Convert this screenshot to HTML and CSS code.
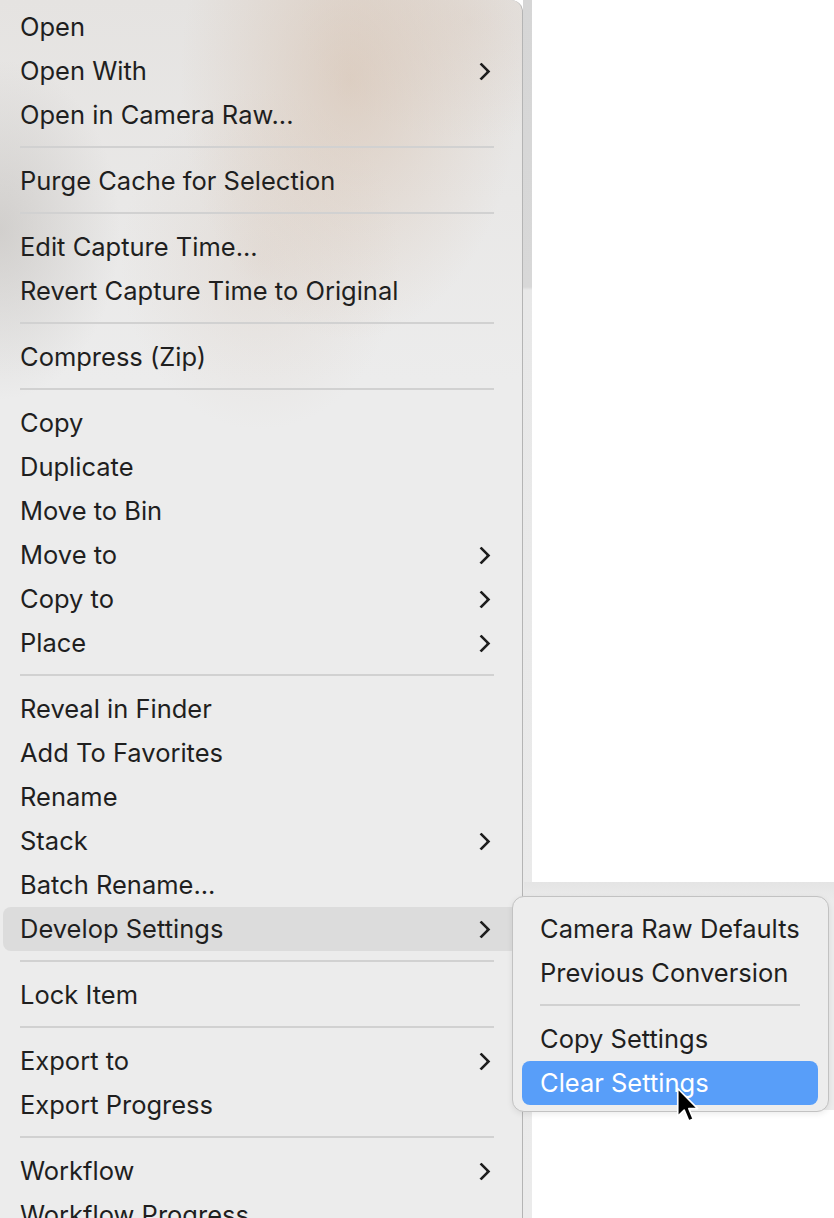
FILE: index.html
```html
<!DOCTYPE html>
<html>
<head>
<meta charset="utf-8">
<link rel="stylesheet" href="styles.css">
</head>
<body>
<div class="screen">
  <div class="menu">
    <div class="item">Open</div>
    <div class="item">Open With<span class="chev"></span></div>
    <div class="item">Open in Camera Raw...</div>
    <div class="sep"></div>
    <div class="item">Purge Cache for Selection</div>
    <div class="sep"></div>
    <div class="item">Edit Capture Time...</div>
    <div class="item">Revert Capture Time to Original</div>
    <div class="sep"></div>
    <div class="item">Compress (Zip)</div>
    <div class="sep"></div>
    <div class="item">Copy</div>
    <div class="item">Duplicate</div>
    <div class="item">Move to Bin</div>
    <div class="item">Move to<span class="chev"></span></div>
    <div class="item">Copy to<span class="chev"></span></div>
    <div class="item">Place<span class="chev"></span></div>
    <div class="sep"></div>
    <div class="item">Reveal in Finder</div>
    <div class="item">Add To Favorites</div>
    <div class="item">Rename</div>
    <div class="item">Stack<span class="chev"></span></div>
    <div class="item">Batch Rename...</div>
    <div class="item active">Develop Settings<span class="chev"></span></div>
    <div class="sep"></div>
    <div class="item">Lock Item</div>
    <div class="sep"></div>
    <div class="item">Export to<span class="chev"></span></div>
    <div class="item">Export Progress</div>
    <div class="sep"></div>
    <div class="item">Workflow<span class="chev"></span></div>
    <div class="item">Workflow Progress</div>
  </div>
  <div class="edge"></div>
  <div class="blank"></div>

  <div class="halo"></div>
  <div class="submenu">
    <div class="item">Camera Raw Defaults</div>
    <div class="item">Previous Conversion</div>
    <div class="sep"></div>
    <div class="item">Copy Settings</div>
    <div class="item selected">Clear Settings</div>
  </div>
  <svg class="cursor" width="26" height="39" viewBox="0 0 17 26">
    <path d="M1 1 L1 19.5 L5.3 15.4 L8.3 22.6 L11.3 21.3 L8.4 14.4 L14.3 14.4 Z" fill="#000" stroke="#fff" stroke-width="1.1" stroke-linejoin="round"/>
  </svg>
</div>
</body>
</html>
```
FILE: styles.css
```css
html, body {
  margin: 0;
  padding: 0;
  background: #ffffff;
}

.screen {
  position: relative;
  width: 834px;
  height: 1218px;
  overflow: hidden;
  display: flex;
  font-family: Inter, "Noto Sans", "DejaVu Sans", sans-serif;
  color: #1f1f1f;
}

.menu {
  width: 523px;
  flex: none;
  box-sizing: border-box;
  padding: 5px 0 0 3px;
  border-right: 1px solid #b4b4b4;
  border-top-right-radius: 12px;
  background:
    radial-gradient(ellipse 170px 260px at 350px 80px, rgba(212, 188, 168, 0.55), rgba(212, 188, 168, 0) 100%),
    radial-gradient(ellipse 140px 170px at 260px 260px, rgba(215, 200, 188, 0.35), rgba(215, 200, 188, 0) 100%),
    radial-gradient(ellipse 120px 170px at 0px 230px, rgba(180, 176, 172, 0.45), rgba(180, 176, 172, 0) 100%),
    radial-gradient(ellipse 170px 120px at 470px 20px, rgba(222, 212, 204, 0.5), rgba(222, 212, 204, 0) 100%),
    linear-gradient(180deg, #e5e3e1 0px, #e9e8e7 200px, #ececec 380px, #ececec 100%);
}

.item {
  height: 44px;
  width: 516px;
  box-sizing: border-box;
  display: flex;
  align-items: center;
  justify-content: space-between;
  padding: 0 28px 0 17px;
  font-size: 25.5px;
  line-height: 44px;
  white-space: nowrap;
  border-radius: 8px;
}

.item.active {
  background: #dcdcdc;
}

.chev {
  width: 10px;
  height: 10px;
  border-right: 3px solid #1e1e1e;
  border-top: 3px solid #1e1e1e;
  transform: rotate(45deg);
  margin-right: 3px;
  border-radius: 1px;
}

.sep {
  height: 2px;
  width: 474px;
  margin: 9px 0 11px 17px;
  background: #d1d1d1;
}

.edge {
  width: 9px;
  flex: none;
  background: linear-gradient(180deg, #d6d6d6 0px, #d8d8d8 287px, #e8e8e8 290px, #ebebeb 100%);
}

.blank {
  flex: 1;
  background: #ffffff;
}

.halo {
  position: absolute;
  left: 524px;
  top: 882px;
  width: 310px;
  height: 228px;
  background: linear-gradient(180deg, #e4e4e4 0px, #ececec 20px, #ececec 100%);
}

.submenu {
  position: absolute;
  left: 512px;
  top: 896px;
  width: 317px;
  box-sizing: border-box;
  padding: 10px 10px 6px 9px;
  border: 1px solid #c2c2c2;
  border-radius: 12px;
  background: #ededed;
  box-shadow: 0 2px 6px rgba(0, 0, 0, 0.08);
}

.submenu .item {
  width: 296px;
  padding: 0 18px;
}

.submenu .sep {
  width: 260px;
  margin: 9px 0 11px 18px;
}

.submenu .item.selected {
  background: #589ef9;
  color: #ffffff;
}

.cursor {
  position: absolute;
  left: 676px;
  top: 1087px;
}
```
